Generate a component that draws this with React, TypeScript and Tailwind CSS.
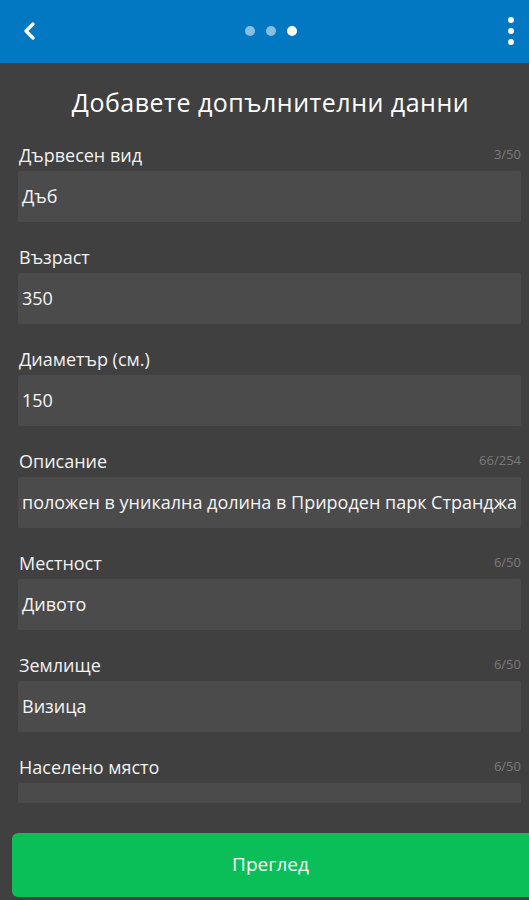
import React from "react";

const fields = [
  { label: "Дървесен вид", value: "Дъб", counter: "3/50" },
  { label: "Възраст", value: "350", counter: "" },
  { label: "Диаметър (см.)", value: "150", counter: "" },
  { label: "Описание", value: "положен в уникална долина в Природен парк Странджа", counter: "66/254" },
  { label: "Местност", value: "Дивото", counter: "6/50" },
  { label: "Землище", value: "Визица", counter: "6/50" },
  { label: "Населено място", value: "", counter: "6/50" },
];

export default function App() {
  return (
    <div
      className="w-[529px] h-[900px] bg-[#404040] flex flex-col overflow-hidden"
      style={{ fontFamily: '"Open Sans", "Noto Sans", sans-serif' }}
    >
      <div className="h-[63px] shrink-0 bg-[#0277c2] flex items-center justify-between relative">
        <div className="w-[60px] h-full flex items-center justify-center pb-[2px]">
          <svg width="18" height="20" viewBox="0 0 18 20">
            <path d="M12 3 L5 10 L12 17" fill="none" stroke="white" strokeWidth="3.4" strokeLinecap="round" strokeLinejoin="round" />
          </svg>
        </div>
        <div className="absolute left-[245px] top-[26px] flex gap-[11px]">
          <div className="w-[10px] h-[10px] rounded-full bg-[#86bfe6]" />
          <div className="w-[10px] h-[10px] rounded-full bg-[#86bfe6]" />
          <div className="w-[10px] h-[10px] rounded-full bg-white" />
        </div>
        <div className="w-[36px] h-full flex flex-col items-center justify-center gap-[5px] pr-[1px] pb-[1px]">
          <div className="w-[6px] h-[6px] rounded-full bg-white" />
          <div className="w-[6px] h-[6px] rounded-full bg-white" />
          <div className="w-[6px] h-[6px] rounded-full bg-white" />
        </div>
      </div>
      <div className="h-[740px] shrink-0 overflow-hidden">
        <div className="h-[78px] flex items-center justify-center pt-[2px] pl-[12px]">
          <div className="text-white text-[25px] tracking-[0.5px]">Добавете допълнителни данни</div>
        </div>
        <div className="flex flex-col gap-[21px] pl-[18px] pr-[8px]">
          {fields.map((f) => (
            <div key={f.label} className="flex flex-col">
              <div className="h-[30px] flex items-center justify-between pb-[2px]">
                <div className="text-[#f2f2f2] text-[18px] pl-[1px]">{f.label}</div>
                <div className="text-[#7a7a7a] text-[13px]">{f.counter}</div>
              </div>
              <div className="h-[51px] w-full bg-[#4b4b4b] rounded-[2px] flex items-center px-[4px]">
                <div className="text-[#f5f5f5] text-[18px] whitespace-nowrap">{f.value}</div>
              </div>
            </div>
          ))}
        </div>
      </div>
      <div className="pt-[30px] pl-[12px]">
        <div className="h-[64px] bg-[#0bbf58] rounded-l-[6px] flex items-center justify-center">
          <div className="text-white text-[19px] pb-[2px]">Преглед</div>
        </div>
      </div>
    </div>
  );
}
